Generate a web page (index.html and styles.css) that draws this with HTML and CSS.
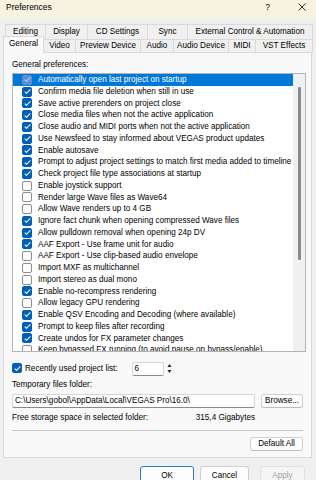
FILE: index.html
```html
<!DOCTYPE html>
<html lang="en">
<head>
    <meta charset="UTF-8">
    <meta name="viewport" content="width=device-width, initial-scale=1.0">
    <title>Preferences</title>
    <link rel="stylesheet" href="styles.css">
</head>
<body>
<div id="prefs">
    <div class="titlebar">
        <span class="caption">Preferences</span>
        <span class="help">?</span>
        <svg class="close" width="8" height="8" viewBox="0 0 8 8"><path d="M0.5 0.5L7.5 7.5M7.5 0.5L0.5 7.5" stroke="#1b1b1b" stroke-width="0.9"/></svg>
    </div>

    <div class="tabs">
        <div class="tabrow back">
            <span class="tab t-editing">Editing</span>
            <span class="tab t-display">Display</span>
            <span class="tab t-cd">CD Settings</span>
            <span class="tab t-sync">Sync</span>
            <span class="tab t-ext">External Control &amp; Automation</span>
        </div>
        <div class="tabrow front">
            <span class="tab t-general sel">General</span>
            <span class="tab t-video">Video</span>
            <span class="tab t-preview">Preview Device</span>
            <span class="tab t-audio">Audio</span>
            <span class="tab t-audiodev">Audio Device</span>
            <span class="tab t-midi">MIDI</span>
            <span class="tab t-vst">VST Effects</span>
        </div>
    </div>

    <div class="page">
        <div class="label">General preferences:</div>
        <div class="listbox">
            <div class="items">
                <div class="item active"><i class="cb on"></i>Automatically open last project on startup</div>
                <div class="item"><i class="cb on"></i>Confirm media file deletion when still in use</div>
                <div class="item"><i class="cb on"></i>Save active prerenders on project close</div>
                <div class="item"><i class="cb on"></i>Close media files when not the active application</div>
                <div class="item"><i class="cb on"></i>Close audio and MIDI ports when not the active application</div>
                <div class="item"><i class="cb on"></i>Use Newsfeed to stay informed about VEGAS product updates</div>
                <div class="item"><i class="cb on"></i>Enable autosave</div>
                <div class="item"><i class="cb on"></i>Prompt to adjust project settings to match first media added to timeline</div>
                <div class="item"><i class="cb on"></i>Check project file type associations at startup</div>
                <div class="item"><i class="cb"></i>Enable joystick support</div>
                <div class="item"><i class="cb"></i>Render large Wave files as Wave64</div>
                <div class="item"><i class="cb"></i>Allow Wave renders up to 4 GB</div>
                <div class="item"><i class="cb on"></i>Ignore fact chunk when opening compressed Wave files</div>
                <div class="item"><i class="cb on"></i>Allow pulldown removal when opening 24p DV</div>
                <div class="item"><i class="cb on"></i>AAF Export - Use frame unit for audio</div>
                <div class="item"><i class="cb"></i>AAF Export - Use clip-based audio envelope</div>
                <div class="item"><i class="cb"></i>Import MXF as multichannel</div>
                <div class="item"><i class="cb"></i>Import stereo as dual mono</div>
                <div class="item"><i class="cb on"></i>Enable no-recompress rendering</div>
                <div class="item"><i class="cb"></i>Allow legacy GPU rendering</div>
                <div class="item"><i class="cb on"></i>Enable QSV Encoding and Decoding (where available)</div>
                <div class="item"><i class="cb on"></i>Prompt to keep files after recording</div>
                <div class="item"><i class="cb on"></i>Create undos for FX parameter changes</div>
                <div class="item"><i class="cb"></i>Keep bypassed FX running (to avoid pause on bypass/enable)</div>
            </div>
            <div class="scrollbar"><div class="thumb"></div></div>
        </div>

        <div class="recent">
            <i class="cb on"></i>
            <span class="recent-label">Recently used project list:</span>
            <span class="field count">6</span>
            <svg class="spin" width="5" height="11" viewBox="0 0 5 11"><path d="M2.5 1L4.5 4H0.5Z M2.5 10L4.5 7H0.5Z" fill="#222"/></svg>
        </div>

        <div class="label temp">Temporary files folder:</div>
        <div class="pathrow">
            <span class="field path">C:\Users\gobol\AppData\Local\VEGAS Pro\16.0\</span>
            <span class="btn browse">Browse...</span>
        </div>

        <div class="freerow">
            <span class="free-label">Free storage space in selected folder:</span>
            <span class="free-value">315,4 Gigabytes</span>
        </div>

        <div class="sep"></div>

        <div class="defrow">
            <span class="btn default">Default All</span>
        </div>
    </div>

    <div class="buttons">
        <span class="btn ok">OK</span>
        <span class="btn cancel">Cancel</span>
        <span class="btn apply">Apply</span>
    </div>
</div>
</body>
</html>
```

FILE: styles.css
```css
body{
    margin:0;
    font-family:"Liberation Sans", Arial, sans-serif;
    font-size:8.15px;
    color:#000;
}
#prefs{
    width:316px;
    height:480px;
    background:#f0f0f0;
    overflow:hidden;
}

/* title bar */
#prefs .titlebar{
    height:18px;
    background:#f6f3e0;
    display:flex;
    align-items:flex-start;
}
#prefs .caption{
    margin-left:6px;
    font-size:8.5px;
    line-height:14px;
}
#prefs .help{
    margin-left:auto;
    font-size:8.5px;
    line-height:14px;
}
#prefs .close{
    margin:3px 10px 0 28px;
}

/* tabs */
#prefs .tabs{margin-top:6px;}
#prefs .tabrow{display:flex;}
#prefs .tabrow.back{
    height:15px;
    margin-left:5px;
}
#prefs .tabrow.front{
    height:13px;
    margin-left:3px;
    align-items:flex-start;
}
#prefs .tab{
    box-sizing:border-box;
    border:1px solid #d9d9d9;
    border-bottom:none;
    margin-right:-1px;
    text-align:center;
    white-space:nowrap;
    background:#f0f0f0;
}
#prefs .back .tab{height:15px;line-height:14px;}
#prefs .front .tab{height:13px;line-height:12px;}
#prefs .front .tab.sel{
    position:relative;
    z-index:1;
    height:17px;
    margin-top:-3px;
    line-height:14px;
    background:#f9f9f9;
}
#prefs .t-editing{width:41px;}
#prefs .t-display{width:43px;}
#prefs .t-cd{width:61px;}
#prefs .t-sync{width:41px;}
#prefs .t-ext{width:126px;}
#prefs .t-general{width:41px;}
#prefs .t-video{width:33px;}
#prefs .t-preview{width:66px;}
#prefs .t-audio{width:34px;}
#prefs .t-audiodev{width:56px;}
#prefs .t-midi{width:28px;}
#prefs .t-vst{width:58px;}

/* page */
#prefs .page{
    margin:0 4px 0 3px;
    border:1px solid #d9d9d9;
    background:#f9f9f9;
    padding:6px 5px 6px 8px;
}
#prefs .label{line-height:12px;}
#prefs .listbox{
    margin-top:2px;
    height:279px;
    box-sizing:border-box;
    border:1px solid #b4b4b4;
    background:#fff;
    display:flex;
}
#prefs .items{
    flex:1;
    overflow:hidden;
}
#prefs .item{
    height:11.75px;
    line-height:11.75px;
    display:flex;
    align-items:center;
    white-space:nowrap;
    padding-left:9px;
}
#prefs .item.active{
    background:#0078d7;
    color:#fff;
}
#prefs .item .cb{margin-right:6px;}

/* checkboxes */
#prefs .cb{
    position:relative;
    flex:none;
    width:10px;
    height:10px;
    box-sizing:border-box;
    border:1px solid #8d8d8d;
    border-radius:2px;
    background:#fdfdfd;
}
#prefs .cb.on{
    border-color:#005fb8;
    background:#005fb8;
}
#prefs .cb.on::after{
    content:"";
    position:absolute;
    left:2.6px;
    top:0.6px;
    width:2.4px;
    height:5px;
    border:solid #fff;
    border-width:0 1.1px 1.1px 0;
    transform:rotate(45deg);
}
#prefs .active .cb.on{
    background:#5b8fcf;
    border-color:#5b8fcf;
}
#prefs .active .cb.on::after{border-color:#b9d2f0;}

#prefs .scrollbar{
    width:12px;
    background:#f0f0f0;
    padding-top:13px;
    box-sizing:border-box;
}
#prefs .thumb{
    width:2.5px;
    height:173px;
    margin-left:5px;
    border-radius:1px;
    background:#8a8a8a;
}

/* fields */
#prefs .field{
    box-sizing:border-box;
    height:14px;
    line-height:12px;
    background:#fff;
    border:1px solid #d6d6d6;
    border-bottom-color:#8a8a8a;
    border-radius:2px;
    padding-left:2px;
    white-space:nowrap;
}
#prefs .btn{
    box-sizing:border-box;
    height:14px;
    line-height:12px;
    text-align:center;
    background:#fdfdfd;
    border:1px solid #d0d0d0;
    border-bottom-color:#bcbcbc;
    border-radius:3px;
}

#prefs .recent{
    margin-top:8px;
    height:16px;
    display:flex;
    align-items:center;
}
#prefs .recent-label{margin-left:3px;}
#prefs .count{
    margin-left:14px;
    width:32px;
    margin-top:1px;
}
#prefs .spin{margin-left:3px;}

#prefs .temp{margin-top:3px;}
#prefs .pathrow{
    margin-top:3px;
    display:flex;
}
#prefs .path{width:243px;}
#prefs .browse{
    margin-left:6px;
    width:42px;
}
#prefs .freerow{
    margin-top:4px;
    line-height:12px;
    display:flex;
}
#prefs .free-value{margin-left:auto;margin-right:51px;}
#prefs .sep{
    margin:6px 0 0;
    width:291px;
    height:1px;
    background:#c8c8c8;
}
#prefs .defrow{
    margin-top:6px;
    display:flex;
    justify-content:flex-end;
    padding-right:3px;
}
#prefs .default{width:53px;}

/* dialog buttons */
#prefs .buttons{
    margin-top:8px;
    display:flex;
    padding-left:140px;
}
#prefs .buttons .btn{
    height:20px;
    line-height:18px;
}
#prefs .ok{
    width:54px;
    border:1.5px solid #2b78c9;
}
#prefs .cancel{
    width:49px;
    margin-left:6px;
}
#prefs .apply{
    width:45px;
    margin-left:11px;
    background:#f5f5f5;
    color:#a2a2a2;
    border-color:#e0e0e0;
}
```
